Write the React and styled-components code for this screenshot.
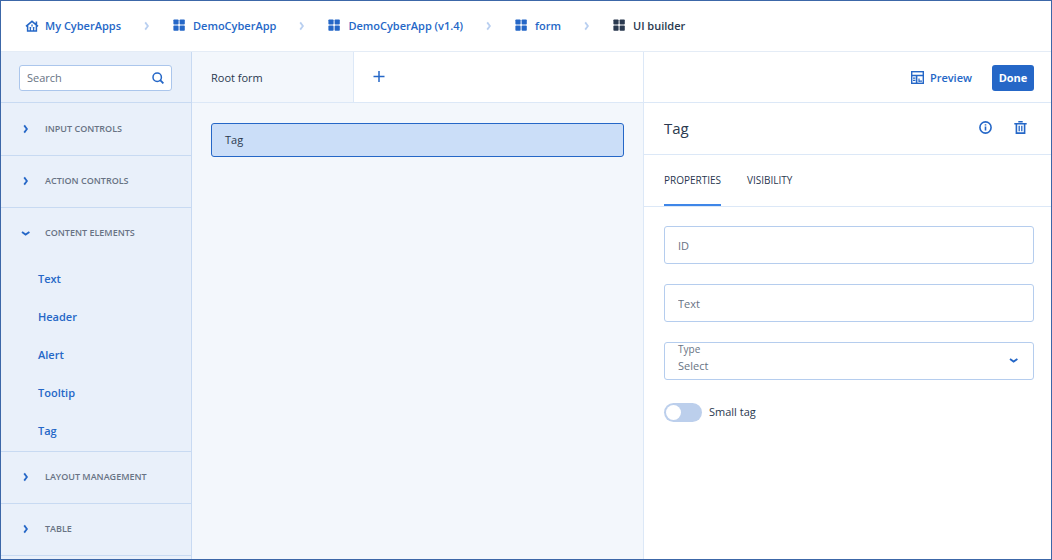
import React, { useState } from "react";
import styled, { createGlobalStyle } from "styled-components";

const blue = "#2567c7";
const ink = "#2a394f";
const muted = "#687384";
const line = "#dce8f7";
const sideLine = "#c8daf2";
const fieldLine = "#b5cdee";

const GlobalStyle = createGlobalStyle`
  *, *::before, *::after { box-sizing: border-box; }
  body {
    margin: 0;
    font-family: "Open Sans", "Noto Sans", sans-serif;
    font-size: 11px;
    line-height: 16px;
    color: ${ink};
    background: #fff;
  }
  button, input, select { font: inherit; color: inherit; margin: 0; }
  button { padding: 0; border: 0; background: none; cursor: pointer; }
  svg { display: block; flex: none; }
`;

const Page = styled.div`
  display: flex;
  flex-direction: column;
  min-height: 100vh;
  border: 1px solid #3c67a8;
`;

const TopBar = styled.header`
  height: 51px;
  padding: 0 24px;
  display: flex;
  align-items: center;
  border-bottom: 1px solid #e4ecf6;
`;

const Crumbs = styled.ol`
  display: flex;
  align-items: center;
  margin: 0;
  padding: 0;
  list-style: none;
`;

const Crumb = styled.li`
  display: flex;
  align-items: center;
`;

const CrumbLink = styled.a`
  display: flex;
  align-items: center;
  gap: 6px;
  font-weight: 600;
  color: ${(p) => (p.$current ? ink : blue)};
  text-decoration: none;
`;

const Separator = styled.span`
  width: 52px;
  display: flex;
  justify-content: center;
  color: #b9cff0;
`;

const Workspace = styled.div`
  flex: 1;
  display: grid;
  grid-template-columns: 191px minmax(0, 1fr) 408px;
`;

const Sidebar = styled.aside`
  background: #e9f0fa;
  border-right: 1px solid ${sideLine};
`;

const SearchRow = styled.div`
  height: 51px;
  padding: 2px 19px 0 18px;
  display: flex;
  align-items: center;
  border-bottom: 1px solid ${sideLine};
`;

const SearchBox = styled.label`
  flex: 1;
  min-width: 0;
  height: 26px;
  padding: 0 7px;
  display: flex;
  align-items: center;
  border: 1px solid #abc6ec;
  border-radius: 3px;
  background: #fff;
  color: ${blue};
`;

const SearchInput = styled.input`
  flex: 1;
  min-width: 0;
  padding: 0;
  border: 0;
  outline: 0;
  background: none;
  color: ${ink};
  &::placeholder { color: ${muted}; opacity: 1; }
`;

const Sections = styled.div`
  padding-top: 1px;
`;

const Section = styled.section`
  border-bottom: 1px solid ${sideLine};
`;

const SectionToggle = styled.button`
  width: 100%;
  height: 51px;
  padding: 0 19px 2px;
  display: flex;
  align-items: center;
  gap: 13px;
  color: ${blue};
`;

const SectionTitle = styled.span`
  font-size: 9px;
  font-weight: 600;
  text-transform: uppercase;
  color: ${muted};
`;

const ItemList = styled.ul`
  margin: 0;
  padding: 1px 0;
  list-style: none;
`;

const Item = styled.button`
  width: 100%;
  height: 38px;
  padding: 0 37px;
  text-align: left;
  font-weight: 600;
  color: ${blue};
`;

const Canvas = styled.main`
  background: #f3f7fc;
`;

const FormTabs = styled.div`
  height: 51px;
  display: flex;
  background: #fff;
  border-bottom: 1px solid ${line};
`;

const FormTab = styled.button`
  width: 162px;
  padding: 2px 19px 0;
  text-align: left;
  background: #f3f7fc;
  border-right: 1px solid ${line};
`;

const AddTab = styled.button`
  width: 50px;
  display: flex;
  align-items: center;
  justify-content: center;
  color: ${blue};
`;

const DropArea = styled.div`
  padding: 20px 19px;
`;

const CanvasElement = styled.button`
  width: 100%;
  height: 34px;
  padding: 0 13px;
  text-align: left;
  font-weight: 500;
  border: 1px solid ${blue};
  border-radius: 3px;
  background: #cbdef8;
`;

const Panel = styled.aside`
  border-left: 1px solid ${line};
`;

const Actions = styled.div`
  height: 51px;
  padding: 2px 17px 0;
  display: flex;
  align-items: center;
  justify-content: flex-end;
  gap: 20px;
  border-bottom: 1px solid ${line};
`;

const PreviewButton = styled.button`
  display: flex;
  align-items: center;
  gap: 6px;
  font-weight: 600;
  color: ${blue};
`;

const DoneButton = styled.button`
  width: 42px;
  height: 26px;
  border-radius: 3px;
  background: ${blue};
  color: #fff;
  font-weight: 700;
`;

const PanelHeader = styled.div`
  height: 52px;
  padding: 0 24px 2px 20px;
  display: flex;
  align-items: center;
  justify-content: space-between;
  border-bottom: 1px solid ${line};
`;

const PanelTitle = styled.h2`
  margin: 0;
  font-size: 15px;
  line-height: 20px;
  font-weight: 400;
`;

const IconRow = styled.div`
  display: flex;
  gap: 22px;
`;

const IconButton = styled.button`
  color: ${blue};
`;

const PanelTabs = styled.div`
  height: 52px;
  padding: 0 20px;
  display: flex;
  gap: 26px;
  border-bottom: 1px solid ${line};
`;

const PanelTab = styled.button`
  font-size: 10px;
  font-weight: 500;
  text-transform: uppercase;
  border-bottom: 2px solid ${(p) => (p.$active ? "#3f86e8" : "transparent")};
`;

const Fields = styled.form`
  padding: 19px 17px 20px 20px;
  display: flex;
  flex-direction: column;
  gap: 20px;
`;

const TextField = styled.input`
  width: 100%;
  height: 38px;
  padding: 0 13px;
  border: 1px solid ${fieldLine};
  border-radius: 3px;
  background: #fff;
  &::placeholder { color: ${muted}; opacity: 1; }
`;

const SelectBox = styled.div`
  height: 38px;
  padding: 0 13px 2px;
  display: flex;
  align-items: center;
  border: 1px solid ${fieldLine};
  border-radius: 3px;
  color: ${blue};
`;

const SelectStack = styled.div`
  flex: 1;
  display: flex;
  flex-direction: column;
  color: ${muted};
`;

const SelectLabel = styled.label`
  font-size: 10px;
  line-height: 12px;
`;

const Select = styled.select`
  appearance: none;
  width: 100%;
  height: 22px;
  padding: 0;
  border: 0;
  outline: 0;
  background: none;
`;

const SwitchRow = styled.label`
  height: 24px;
  display: flex;
  align-items: center;
  gap: 7px;
`;

const Switch = styled.input`
  appearance: none;
  width: 38px;
  height: 19px;
  padding: 2px;
  display: flex;
  border-radius: 10px;
  background: #bccfec;
  cursor: pointer;
  &::before {
    content: "";
    width: 15px;
    height: 15px;
    border-radius: 50%;
    background: #fff;
  }
  &:checked { background: ${blue}; justify-content: flex-end; }
`;

const HomeIcon = () => (
  <svg width="14" height="14" viewBox="0 0 14 14" fill="none" stroke="currentColor">
    <path d="M1 7.3 7 2.3l6 5M11.4 6V2.6" strokeWidth="1.6" />
    <path d="M2.6 6.5v5.6h8.8V6.5" strokeWidth="1.5" />
    <path d="M5.4 12V9.2M8.6 12V9.2M4.6 8.6h1.6M7.8 8.6h1.6M7 5.4v2" strokeWidth="1.3" />
  </svg>
);

const GridIcon = () => (
  <svg width="14" height="14" viewBox="0 0 14 14" fill="currentColor">
    <rect x="0.4" y="0.4" width="5.2" height="5.2" rx="0.8" />
    <rect x="6.6" y="0.4" width="5.2" height="5.2" rx="0.8" />
    <rect x="0.4" y="6.6" width="5.2" height="5.2" rx="0.8" />
    <rect x="6.6" y="6.6" width="5.2" height="5.2" rx="0.8" />
  </svg>
);

const ChevronRight = () => (
  <svg width="12" height="12" viewBox="0 0 12 12" fill="none" stroke="currentColor" strokeWidth="1.8">
    <path d="M4.2 2.4 6.9 6 4.2 9.6" />
  </svg>
);

const ChevronDown = () => (
  <svg width="12" height="12" viewBox="0 0 12 12" fill="none" stroke="currentColor" strokeWidth="1.8">
    <path d="M2 5 5.6 7.6 9.4 5" />
  </svg>
);

const SearchIcon = () => (
  <svg width="12" height="12" viewBox="0 0 12 12" fill="none" stroke="currentColor" strokeWidth="1.5">
    <circle cx="5.2" cy="5.2" r="4.2" />
    <path d="m8.2 8.2 3.2 3.2" strokeWidth="1.8" />
  </svg>
);

const PlusIcon = () => (
  <svg width="12" height="12" viewBox="0 0 12 12" fill="none" stroke="currentColor" strokeWidth="1.5">
    <path d="M6 0v11M.5 5.5h11" />
  </svg>
);

const PreviewIcon = () => (
  <svg width="13" height="14" viewBox="0 0 13 14" fill="none" stroke="currentColor">
    <rect x="0.7" y="0.7" width="11.6" height="11.6" strokeWidth="1.4" />
    <path d="M0.5 4.5h12M5.6 4.5v8" strokeWidth="1.6" />
    <path d="M2 7.2h2.4M2 9.4h2.4M8 11V7.4M8.6 10.2h2.4" strokeWidth="1.2" />
  </svg>
);

const InfoIcon = () => (
  <svg width="13" height="13" viewBox="0 0 13 13" fill="none" stroke="currentColor" strokeWidth="1.6">
    <circle cx="6.5" cy="6.5" r="5.6" />
    <path d="M6.5 5.6v4M6.5 3.2v1.4" />
  </svg>
);

const TrashIcon = () => (
  <svg width="13" height="13" viewBox="0 0 13 13" fill="none" stroke="currentColor" strokeWidth="1.6">
    <path d="M0.3 2.7h12.4M4.3 0.8h4.4" />
    <path d="M2.4 3v9.1h8.2V3" />
    <path d="M5.2 4.8v5.4M7.8 4.8v5.4" strokeWidth="1.3" />
  </svg>
);

const crumbs = [
  { label: "My CyberApps", home: true },
  { label: "DemoCyberApp" },
  { label: "DemoCyberApp (v1.4)" },
  { label: "form" },
  { label: "UI builder", current: true },
];

const sections = [
  { title: "Input controls", items: [] },
  { title: "Action controls", items: [] },
  { title: "Content elements", items: ["Text", "Header", "Alert", "Tooltip", "Tag"] },
  { title: "Layout management", items: [] },
  { title: "Table", items: [] },
];

export default function App() {
  const [open, setOpen] = useState("Content elements");
  const [tab, setTab] = useState("Properties");

  return (
    <>
      <GlobalStyle />
      <Page>
        <TopBar>
          <nav aria-label="Breadcrumb">
            <Crumbs>
              {crumbs.map((c, i) => (
                <Crumb key={c.label}>
                  {i > 0 && (
                    <Separator>
                      <ChevronRight />
                    </Separator>
                  )}
                  <CrumbLink href="#" $current={c.current} aria-current={c.current ? "page" : undefined}>
                    {c.home ? <HomeIcon /> : <GridIcon />}
                    {c.label}
                  </CrumbLink>
                </Crumb>
              ))}
            </Crumbs>
          </nav>
        </TopBar>

        <Workspace>
          <Sidebar>
            <SearchRow>
              <SearchBox>
                <SearchInput type="text" placeholder="Search" aria-label="Search" />
                <SearchIcon />
              </SearchBox>
            </SearchRow>
            <Sections>
              {sections.map((s) => (
                <Section key={s.title}>
                  <SectionToggle
                    type="button"
                    aria-expanded={open === s.title}
                    onClick={() => setOpen(open === s.title ? "" : s.title)}
                  >
                    {open === s.title ? <ChevronDown /> : <ChevronRight />}
                    <SectionTitle>{s.title}</SectionTitle>
                  </SectionToggle>
                  {open === s.title && s.items.length > 0 && (
                    <ItemList>
                      {s.items.map((item) => (
                        <li key={item}>
                          <Item type="button">{item}</Item>
                        </li>
                      ))}
                    </ItemList>
                  )}
                </Section>
              ))}
            </Sections>
          </Sidebar>

          <Canvas>
            <FormTabs>
              <FormTab type="button">Root form</FormTab>
              <AddTab type="button" aria-label="Add form">
                <PlusIcon />
              </AddTab>
            </FormTabs>
            <DropArea>
              <CanvasElement type="button">Tag</CanvasElement>
            </DropArea>
          </Canvas>

          <Panel>
            <Actions>
              <PreviewButton type="button">
                <PreviewIcon />
                Preview
              </PreviewButton>
              <DoneButton type="button">Done</DoneButton>
            </Actions>
            <PanelHeader>
              <PanelTitle>Tag</PanelTitle>
              <IconRow>
                <IconButton type="button" aria-label="Info">
                  <InfoIcon />
                </IconButton>
                <IconButton type="button" aria-label="Delete">
                  <TrashIcon />
                </IconButton>
              </IconRow>
            </PanelHeader>
            <PanelTabs role="tablist">
              {["Properties", "Visibility"].map((t) => (
                <PanelTab
                  key={t}
                  type="button"
                  role="tab"
                  aria-selected={tab === t}
                  $active={tab === t}
                  onClick={() => setTab(t)}
                >
                  {t}
                </PanelTab>
              ))}
            </PanelTabs>
            <Fields>
              <TextField type="text" placeholder="ID" aria-label="ID" />
              <TextField type="text" placeholder="Text" aria-label="Text" />
              <SelectBox>
                <SelectStack>
                  <SelectLabel htmlFor="tag-type">Type</SelectLabel>
                  <Select id="tag-type" defaultValue="">
                    <option value="">Select</option>
                  </Select>
                </SelectStack>
                <ChevronDown />
              </SelectBox>
              <SwitchRow>
                <Switch type="checkbox" role="switch" />
                Small tag
              </SwitchRow>
            </Fields>
          </Panel>
        </Workspace>
      </Page>
    </>
  );
}
